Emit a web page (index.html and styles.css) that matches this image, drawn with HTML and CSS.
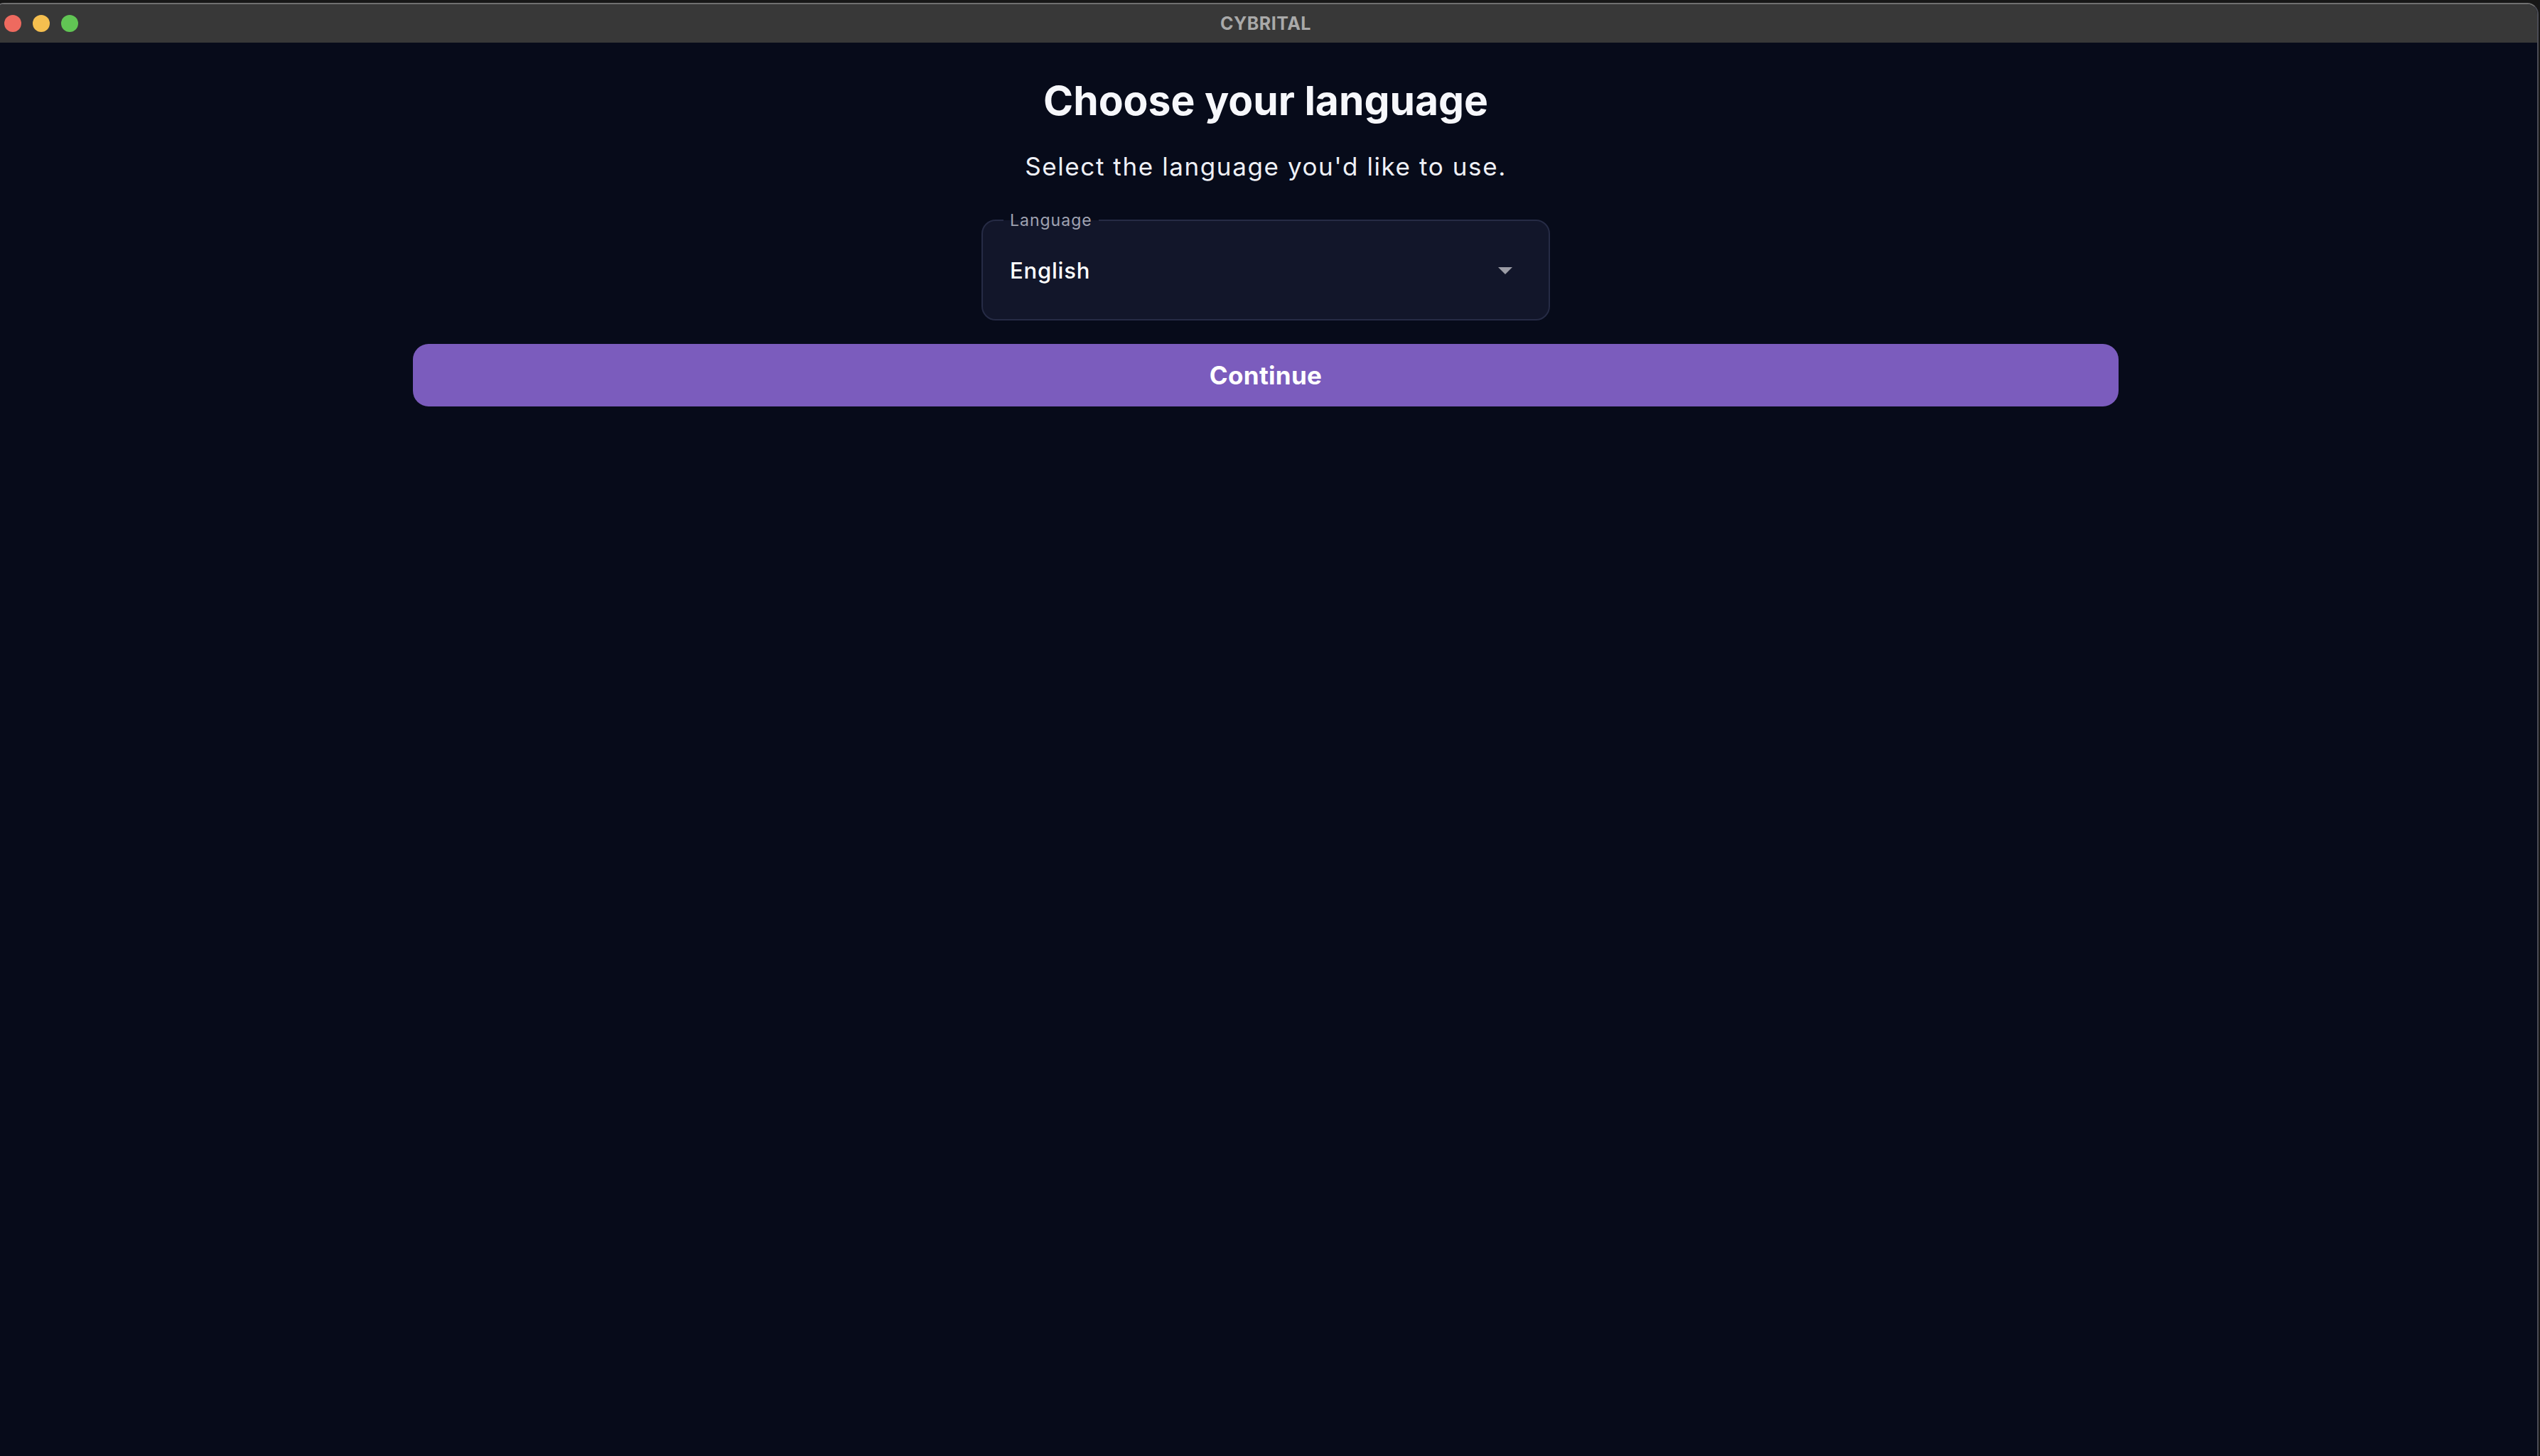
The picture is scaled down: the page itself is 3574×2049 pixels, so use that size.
FILE: index.html
```html
<!DOCTYPE html>
<html lang="en">
<head>
  <meta charset="UTF-8" />
  <meta name="viewport" content="width=device-width, initial-scale=1.0" />
  <title>Cybrital</title>
  <link rel="stylesheet" href="styles.css">
</head>
<body>

  <div class="window">
    <div class="titlebar">
      <div class="lights">
        <span class="light red"></span>
        <span class="light yellow"></span>
        <span class="light green"></span>
      </div>
      <div class="app-name">CYBRITAL</div>
      <div></div>
    </div>

    <div class="content">
      <h1>Choose your language</h1>
      <p class="subtitle">Select the language you'd like to use.</p>

      <div class="select-box" onclick="toggleMenu()">
        <label class="select-label">Language</label>
        <span id="selectedLang" class="select-value">English</span>
        <svg class="select-arrow" viewBox="0 0 24 24" width="48" height="48">
          <path d="M7 10l5 5 5-5z" fill="currentColor" />
        </svg>
      </div>

      <button class="continue-button" onclick="continueSetup()">Continue</button>
    </div>
  </div>

  <script>
    const languages = ['English', 'Français', 'Deutsch', 'Español'];
    let langIndex = 0;

    // cycle through languages on click until a real menu exists
    function toggleMenu() {
      langIndex = (langIndex + 1) % languages.length;
      document.getElementById('selectedLang').textContent = languages[langIndex];
    }

    function continueSetup() {
      console.log('language:', languages[langIndex]);
    }
  </script>
</body>
</html>
```

FILE: styles.css
```css
body {
  margin: 0;
  background: #171717;
  font-family: Inter, "Noto Sans", sans-serif;
  overflow: hidden;
}

.window {
  margin-top: 4px;
  margin-left: -8px;
  width: calc(100% + 6px);
  height: calc(100vh - 4px);
  background: #070b1a;
  border-top: 2px solid #707070;
  border-right: 2px solid #4a4c55;
  border-radius: 14px 16px 0 0;
  overflow: hidden;
  box-sizing: border-box;
}

.titlebar {
  display: grid;
  grid-template-columns: 1fr auto 1fr;
  align-items: center;
  height: 54px;
  background: #383838;
}

.lights {
  display: flex;
  gap: 16px;
  padding-left: 14px;
}

.light {
  width: 24px;
  height: 24px;
  border-radius: 50%;
}

.red { background: #ee6a5f; }
.yellow { background: #f5bf4f; }
.green { background: #61c554; }

.app-name {
  color: #a9a9a9;
  font-size: 25px;
  font-weight: 700;
  letter-spacing: 0.5px;
}

.content {
  display: flex;
  flex-direction: column;
  align-items: center;
  padding-top: 47px;
}

h1 {
  margin: 0;
  color: #f6f7fb;
  font-size: 57px;
  font-weight: 700;
  line-height: 70px;
}

.subtitle {
  margin: 35px 0 0;
  color: #eef0f6;
  font-size: 35px;
  line-height: 44px;
  letter-spacing: 1.6px;
}

.select-box {
  position: relative;
  display: flex;
  align-items: center;
  justify-content: space-between;
  box-sizing: border-box;
  width: 800px;
  height: 142px;
  margin-top: 53px;
  padding: 0 37px 0 38px;
  background: #12162a;
  border: 2px solid #262b45;
  border-radius: 20px;
  cursor: pointer;
}

.select-label {
  position: absolute;
  top: -14px;
  left: 29px;
  padding: 0 9px;
  color: #a0a3b2;
  font-size: 23px;
  line-height: 26px;
  letter-spacing: 1px;
  background: linear-gradient(to bottom, #070b1a 50%, #12162a 50%);
}

.select-value {
  color: #ffffff;
  font-size: 31px;
  font-weight: 500;
  letter-spacing: 0.8px;
}

.select-arrow {
  color: #9c9da6;
}

.continue-button {
  width: 2400px;
  height: 88px;
  margin-top: 33px;
  background: #7b5cbd;
  color: #ffffff;
  border: none;
  border-radius: 22px;
  font-family: inherit;
  font-size: 35px;
  font-weight: 700;
  letter-spacing: 0.3px;
  cursor: pointer;
}
```
